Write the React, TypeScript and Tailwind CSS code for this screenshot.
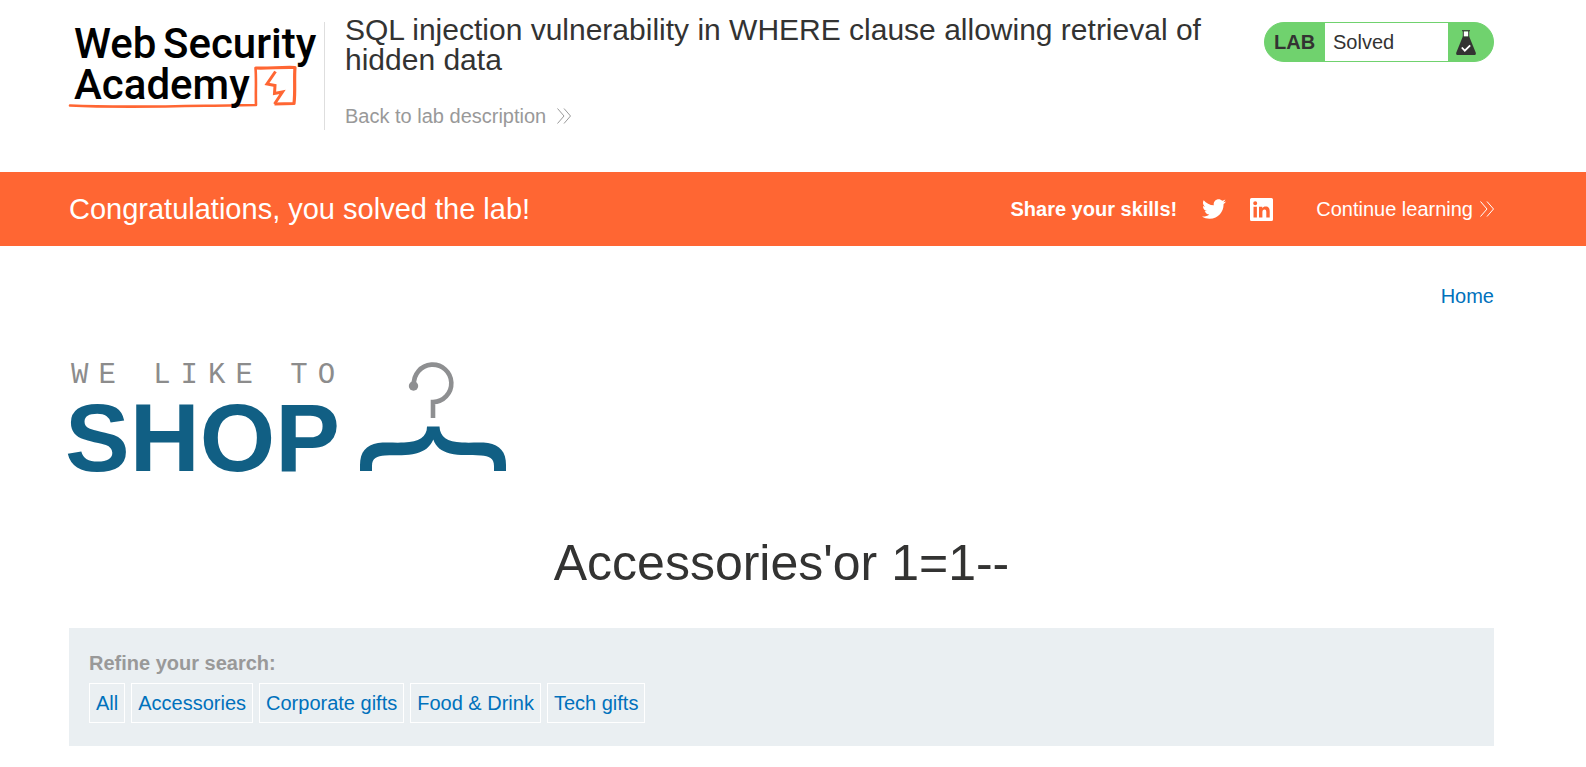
import { FaTwitter } from "react-icons/fa";

const filters = ["All", "Accessories", "Corporate gifts", "Food & Drink", "Tech gifts"];

function DoubleChevron() {
  return (
    <svg width="14" height="16" viewBox="0 0 14 16" fill="none" stroke="currentColor" strokeWidth="1" aria-hidden="true">
      <path d="M0.500 0.500L7 8L0.500 15.500M7 0.500L13.500 8L7 15.500" />
    </svg>
  );
}

function AcademyLogo() {
  return (
    <svg width="255" height="108" viewBox="0 0 255 108" role="img" aria-label="Web Security Academy" className="shrink-0 overflow-visible">
      <path d="M1 83.500C60 86.500 130 83.500 187 83C186.500 70 187.500 58 186.500 46" fill="none" stroke="#ff6633" strokeWidth="2.600" strokeLinejoin="round" strokeLinecap="round" />
      <path d="M186.500 46C200 46.500 212 45 226 45.500C225 57 226.500 69 225 81.500L205.500 82" fill="none" stroke="#ff6633" strokeWidth="3.200" strokeLinejoin="round" />
      <path d="M206.500 49.500L198 62L206 63.500L205.500 71.500L213.500 70L205.500 82" fill="none" stroke="#ff6633" strokeWidth="3" />
      <g fill="#000" className="font-['Roboto',sans-serif] text-[42px] font-medium">
        <text x="5" y="36">Web</text>
        <text x="94" y="36">Security</text>
        <text x="5" y="77">Academy</text>
      </g>
    </svg>
  );
}

function ShopLogo() {
  return (
    <svg width="440" height="114" viewBox="0 0 440 114" role="img" aria-label="We like to shop" className="block overflow-visible">
      <text x="2" y="21" fill="#8c8c8c" className="font-['Liberation_Mono',monospace] text-[29px] tracking-[10px]">WE LIKE TO</text>
      <text x="-4" y="109" fill="#115f84" className="font-['Liberation_Sans',sans-serif] text-[97px] font-bold">SHOP</text>
      <path d="M345 23A18.700 18.700 0 1 1 364 40V56" fill="none" stroke="#8e8f91" strokeWidth="4.600" />
      <circle cx="344.500" cy="24" r="4.700" fill="#8e8f91" />
      <path d="M358 64.500H370.500C371 75 378 80 393 80.500C403 81 411 80 419 81C431 83 437 90 437 103V109H425V104C425 96 420 94 412 93.500C400 93 391 94 381 91.500C372 89 367 85 364.300 77.500C361 85 356 89 347 91.500C338 94 328 93 316 93.500C308 94 303 96 303 104V109H291V103C291 90 297 83 309 81C317 80 326 81 335 80.500C350 80 358 75 358 64.500Z" fill="#115f84" />
    </svg>
  );
}

export default function App() {
  return (
    <div className="min-h-screen bg-white font-['Liberation_Sans',Arial,sans-serif] text-[20px] leading-6 text-[#333332]">
      <header className="flex items-start pt-[22px] pr-[92px] pb-[42px] pl-[69px]">
        <AcademyLogo />
        <div className="-mt-[7px] flex min-w-0 flex-1 items-start justify-between">
          <div className="mt-[7px] h-[108px] w-px shrink-0 bg-[#dedede]" />
          <div className="min-w-0 flex-1 pl-5">
            <h2 className="max-w-[880px] text-[30px] leading-[30px]">
              SQL injection vulnerability in WHERE clause allowing retrieval of hidden data
            </h2>
            <a href="#lab" className="mt-[29px] inline-flex items-center gap-[11px] text-[#999]">
              Back to lab description <DoubleChevron />
            </a>
          </div>
          <div className="mt-[7px] flex h-10 w-[230px] shrink-0 items-stretch overflow-hidden rounded-[20px] border border-[#70d26e] bg-[#70d26e]">
            <span className="flex w-[60px] items-center pl-[9px] font-bold">LAB</span>
            <p className="flex flex-1 items-center bg-white pl-2">Solved</p>
            <span className="flex w-[45px] items-center pl-2">
              <svg width="20" height="25" viewBox="0 0 20 25" aria-hidden="true">
                <path d="M7 1.500H13V6.500H7Z" fill="#fff" />
                <path d="M6 0.700H14M7.300 1V7M12.700 1V7" fill="none" stroke="#333332" strokeWidth="1" />
                <path d="M6.800 6.500H13.200L19.700 22.500C20.200 24 19.500 25 18 25H2C0.500 25 -0.200 24 0.300 22.500Z" fill="#333332" />
                <path d="M5.800 17.500L8.800 20.700L14.200 15.300" fill="none" stroke="#fff" strokeWidth="1.800" />
              </svg>
            </span>
          </div>
        </div>
      </header>

      <section className="flex h-[74px] items-center justify-between bg-[#ff6633] pr-[92px] pl-[69px] text-white">
        <h4 className="text-[29px] leading-8">Congratulations, you solved the lab!</h4>
        <div className="flex items-center">
          <span className="font-bold">Share your skills!</span>
          <a href="#twitter" aria-label="Twitter" className="ml-[25px]">
            <FaTwitter size={24} />
          </a>
          <a href="#linkedin" aria-label="LinkedIn" className="ml-6">
            <svg width="23" height="23" viewBox="0 0 23 23" aria-hidden="true">
              <path d="M1.500 0H21.500Q23 0 23 1.500V21.500Q23 23 21.500 23H1.500Q0 23 0 21.500V1.500Q0 0 1.500 0ZM3.500 8.700V19.500H6.900V8.700ZM5.200 3.300A2 2 0 1 0 5.200 7.300A2 2 0 1 0 5.200 3.300ZM9 8.700V19.500H12.400V14.200C12.400 12.600 13 11.500 14.500 11.500C16 11.500 16.300 12.700 16.300 14.300V19.500H19.700V13.500C19.700 10.500 18.700 8.500 15.600 8.500C14 8.500 12.900 9.200 12.300 10.200V8.700Z" fill="#fff" fillRule="evenodd" />
            </svg>
          </a>
          <a href="#learn" className="ml-[43px] flex items-center gap-[7px]">
            Continue learning <DoubleChevron />
          </a>
        </div>
      </section>

      <main className="pr-[92px] pl-[69px]">
        <nav className="flex justify-end pt-[38px]">
          <a href="#home" className="text-[#0071bc]">Home</a>
        </nav>
        <div className="pt-[54px]">
          <ShopLogo />
        </div>
        <h1 className="pt-[58px] text-center text-[50px] leading-[58px]">Accessories'or 1=1--</h1>
        <section className="mt-9 bg-[#eaeff2] px-5 pt-6 pb-[23px]">
          <p className="font-bold leading-[22px] text-[#999]">Refine your search:</p>
          <div className="mt-[9px] flex flex-wrap gap-1.5">
            {filters.map((name) => (
              <a key={name} href="#filter" className="flex h-10 items-center border border-white px-1.5 text-[#0071bc]">
                {name}
              </a>
            ))}
          </div>
        </section>
      </main>
    </div>
  );
}
